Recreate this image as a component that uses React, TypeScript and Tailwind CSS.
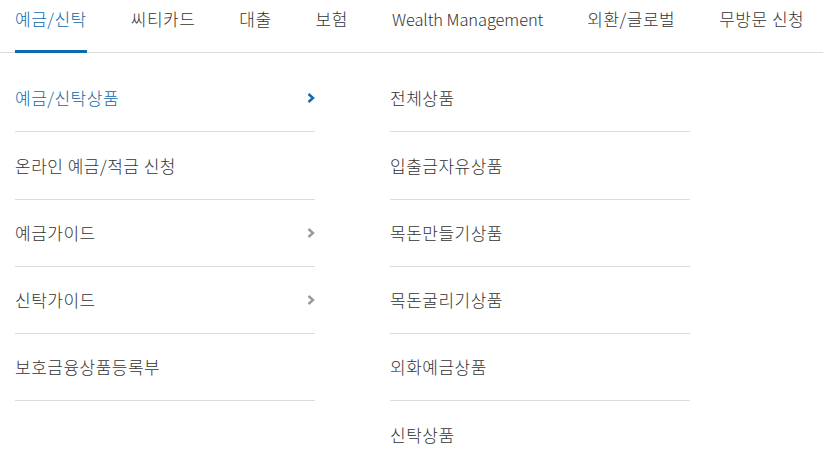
const tabs = ['예금/신탁', '씨티카드', '대출', '보험', 'Wealth Management', '외환/글로벌', '무방문 신청'];

const leftMenu = [
  { label: '예금/신탁상품', arrow: true, active: true },
  { label: '온라인 예금/적금 신청', arrow: false, active: false },
  { label: '예금가이드', arrow: true, active: false },
  { label: '신탁가이드', arrow: true, active: false },
  { label: '보호금융상품등록부', arrow: false, active: false },
];

const rightMenu = ['전체상품', '입출금자유상품', '목돈만들기상품', '목돈굴리기상품', '외화예금상품', '신탁상품'];

function Chevron({ active }: { active: boolean }) {
  return (
    <svg width="8" height="10" viewBox="0 0 8 10" className={active ? 'text-[#0b6aae]' : 'text-[#9a9a9a]'}>
      <polyline points="1.5,1 6,5 1.5,9" fill="none" stroke="currentColor" strokeWidth="2.4" />
    </svg>
  );
}

export default function App() {
  return (
    <div
      className="h-[454px] w-[823px] overflow-hidden bg-white text-[17px] font-light text-[#333]"
      style={{ fontFamily: '"Noto Sans CJK KR", "Noto Sans", sans-serif' }}
    >
      {/* Top tabs */}
      <nav className="flex h-[53px] items-start gap-[44px] border-b border-[#dcdcdc] pl-[15px]">
        {tabs.map((t, i) => (
          <div
            key={t}
            className={
              i === 0
                ? '-mb-px flex h-[53px] items-start border-b-[3px] border-[#0b6aae] pt-[6px] text-[#0b6aae]'
                : 'flex h-[53px] items-start pt-[6px]'
            }
          >
            <span
              className={
                t === 'Wealth Management'
                  ? 'whitespace-nowrap text-[16.5px] leading-[26px] tracking-[-0.1px]'
                  : 'whitespace-nowrap leading-[26px] tracking-[0.5px]'
              }
            >
              {t}
            </span>
          </div>
        ))}
      </nav>

      {/* Menu columns */}
      <div className="flex gap-[75px] pl-[15px] pt-[12px]">
        <ul className="w-[300px]">
          {leftMenu.map((m) => (
            <li
              key={m.label}
              className="flex h-[67.25px] items-center justify-between border-b border-[#dcdcdc]"
            >
              <span className={m.active ? 'tracking-[0.5px] text-[#0b6aae]' : 'tracking-[0.5px]'}>{m.label}</span>
              {m.arrow && <Chevron active={m.active} />}
            </li>
          ))}
        </ul>
        <ul className="w-[300px]">
          {rightMenu.map((m) => (
            <li key={m} className="flex h-[67.25px] items-center border-b border-[#dcdcdc]">
              <span className="tracking-[0.5px]">{m}</span>
            </li>
          ))}
        </ul>
      </div>
    </div>
  );
}
